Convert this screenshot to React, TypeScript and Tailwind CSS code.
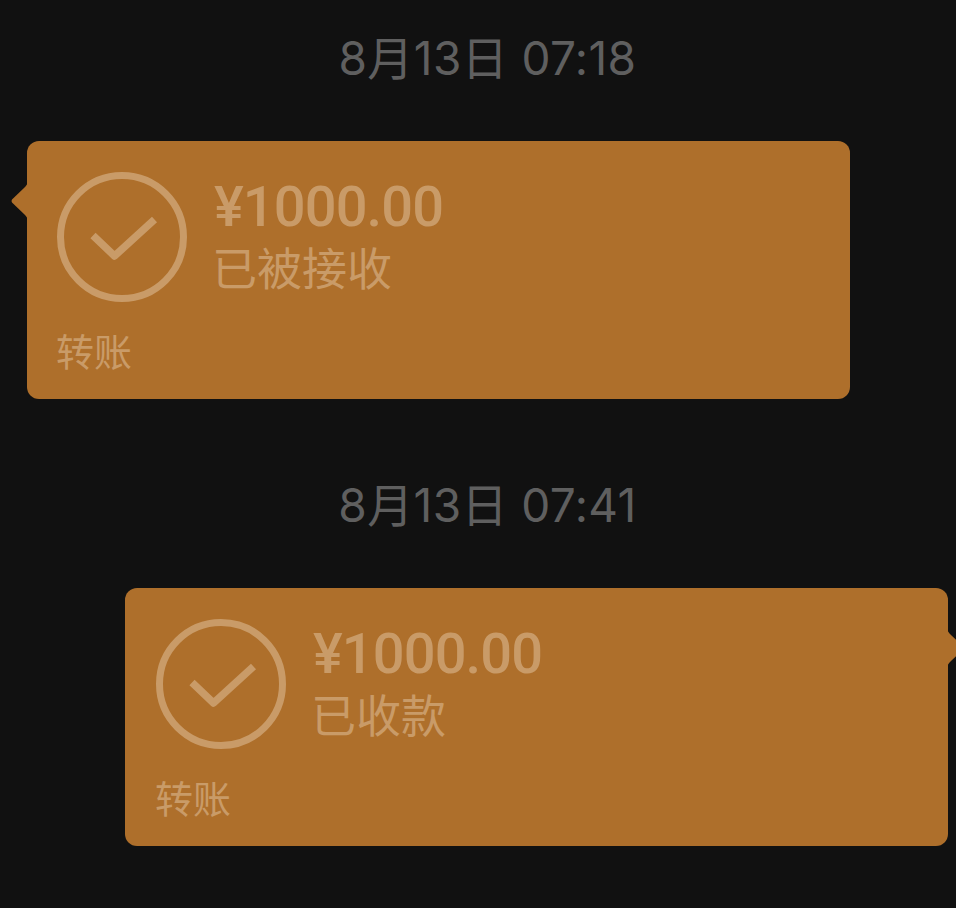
const FONT = "font-['Inter','Noto_Sans_CJK_SC',sans-serif]";

const CheckCircle = () => (
  <svg width="130" height="130" viewBox="0 0 130 130" fill="none" className="shrink-0">
    <circle cx="65" cy="65" r="61.5" stroke="#c99b68" strokeWidth="7" />
    <path d="M36 63.5 L57.5 84 L97.5 47.5" stroke="#c99b68" strokeWidth="7.5" strokeLinejoin="round" />
  </svg>
);

const Tail = ({ right }: { right?: boolean }) => (
  <svg
    width="17"
    height="42"
    viewBox="0 0 17 42"
    className={right ? 'absolute top-[39px] -right-[16px] -scale-x-100' : 'absolute top-[39px] -left-[16px]'}
  >
    <path d="M17 0 C17 4 15 6 13 8 L1 19.5 Q0 21 1 22.5 L13 34 C15 36 17 38 17 42 Z" fill="#ae6f2b" />
  </svg>
);

interface TransferCardProps {
  status: string;
  right?: boolean;
}

const TransferCard = ({ status, right }: TransferCardProps) => (
  <div className={`relative flex h-[258px] w-[823px] flex-col rounded-[12px] bg-[#ae6f2b] pt-[31px] text-[#c99b68] ${right ? 'self-end pl-[31px]' : 'self-start pl-[30px]'}`}>
    <Tail right={right} />
    <div className="flex gap-[27px]">
      <CheckCircle />
      <div className="flex flex-col pt-[4px]">
        <div className="font-['Roboto',sans-serif] text-[56px] font-medium leading-[62px] tracking-[-0.9px]">¥1000.00</div>
        <div className="-ml-[2px] text-[45px] leading-[63px]">{status}</div>
      </div>
    </div>
    <div className="-ml-[1px] mt-[25px] text-[38px] leading-[50px]">转账</div>
  </div>
);

const TimeLabel = ({ children }: { children: string }) => (
  <div className="text-center text-[46px] leading-[56px] tracking-[0.4px] text-[#5f5f5f]">{children}</div>
);

export default function App() {
  return (
    <div className={`h-[908px] w-[956px] overflow-hidden bg-[#111111] pl-[27px] pt-[30px] ${FONT}`}>
      <div className="flex w-[921px] flex-col">
        <TimeLabel>8月13日 07:18</TimeLabel>
        <div className="mt-[55px] flex flex-col">
          <TransferCard status="已被接收" />
        </div>
        <div className="mt-[78px]">
          <TimeLabel>8月13日 07:41</TimeLabel>
        </div>
        <div className="mt-[55px] flex flex-col">
          <TransferCard status="已收款" right />
        </div>
      </div>
    </div>
  );
}
